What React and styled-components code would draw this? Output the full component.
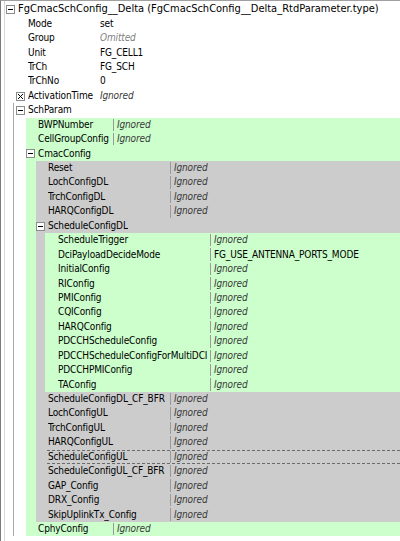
import React from 'react';
import styled, { createGlobalStyle, css } from 'styled-components';

const GlobalStyle = createGlobalStyle`
    html, body {
        margin: 0;
        padding: 0;
        background: #ffffff;
    }
    body {
        font-family: 'DejaVu Sans Condensed', 'Liberation Sans', sans-serif;
        font-size: 10px;
        color: #000000;
    }
`;

const GREEN = '#ccffcc';
const GRAY = '#cccccc';

// x of the label text for each depth, and where the body of that depth starts
const textX = (d) => 18 + 10 * d;
const bodyLeft = (d) => (d < 2 ? 1 : [26, 36, 45][d - 2]);
const labelWidth = [0, 72, 75, 122, 152];

const Frame = styled.div`
    width: 400px;
    height: 541px;
    box-sizing: border-box;
    padding-top: 1px;
    border-top: 1px solid #a0a0a0;
    border-left: 1px solid #7a7a7a;
    overflow: hidden;
    background: linear-gradient(to right, transparent 3px, #d8d8d8 3px, #d8d8d8 4px, transparent 4px) #ffffff;
`;

const GroupWrap = styled.div`
    ${(props) => props.$guide && css`
        background: linear-gradient(to right, transparent 12px, #a8a8a8 12px, #a8a8a8 13px, transparent 13px);
    `}
`;

const Body = styled.div`
    margin-left: ${(props) => props.$offset}px;
    background: ${(props) => props.$bg || 'transparent'};
`;

const Row = styled.div`
    display: flex;
    align-items: stretch;
    height: 14.45px;
    line-height: 14px;
    white-space: nowrap;
    padding-left: ${(props) => props.$pad}px;
    position: relative;
    font-size: ${(props) => (props.$title ? 11 : 10)}px;
    letter-spacing: ${(props) => (props.$title ? 0 : -0.15)}px;
`;

const Inner = styled.div`
    flex: 1;
    display: flex;
    align-items: center;
    box-sizing: border-box;
    margin-left: -1px;
    padding-left: 1px;
    border-top: 1px dashed ${(props) => (props.$focus ? '#6a6a6a' : 'transparent')};
    border-bottom: 1px dashed ${(props) => (props.$focus ? '#6a6a6a' : 'transparent')};
`;

const Toggle = styled.span`
    position: absolute;
    left: ${(props) => props.$left}px;
    top: 3px;
    width: 9px;
    height: 9px;
    box-sizing: border-box;
    border: 1px solid #8c8c8c;
    background: #ffffff;
    display: flex;
    align-items: center;
    justify-content: center;
`;

const Label = styled.span`
    width: ${(props) => (props.$width ? `${props.$width}px` : 'auto')};
    flex-shrink: 0;
    overflow: hidden;
`;

const Value = styled.span`
    height: 100%;
    display: flex;
    align-items: center;
    padding-left: ${(props) => (props.$sep ? 3 : 0)}px;
    border-left: ${(props) => (props.$sep ? '1px solid #9a9a9a' : 'none')};
    font-style: ${(props) => (props.$muted ? 'italic' : 'normal')};
    color: ${(props) => (props.$muted === 'light' ? '#7f7f7f' : props.$muted ? '#3a3a3a' : '#000000')};
`;

const MinusIcon = () => (
    <svg width="7" height="7" viewBox="0 0 7 7">
        <path d="M1 3.5H6" stroke="#000" strokeWidth="1" />
    </svg>
);

const CrossIcon = () => (
    <svg width="7" height="7" viewBox="0 0 7 7">
        <path d="M1 1L6 6M6 1L1 6" stroke="#000" strokeWidth="1" />
    </svg>
);

const ig = (label, extra = {}) => ({ label, value: 'Ignored', muted: true, ...extra });

const tree = {
    label: 'FgCmacSchConfig__Delta (FgCmacSchConfig__Delta_RtdParameter.type)',
    children: [
        { label: 'Mode', value: 'set' },
        { label: 'Group', value: 'Omitted', muted: 'light' },
        { label: 'Unit', value: 'FG_CELL1' },
        { label: 'TrCh', value: 'FG_SCH' },
        { label: 'TrChNo', value: '0' },
        ig('ActivationTime', { cross: true }),
        {
            label: 'SchParam',
            guide: true,
            bg: GREEN,
            children: [
                ig('BWPNumber'),
                ig('CellGroupConfig'),
                {
                    label: 'CmacConfig',
                    bg: GRAY,
                    children: [
                        ig('Reset'),
                        ig('LochConfigDL'),
                        ig('TrchConfigDL'),
                        ig('HARQConfigDL'),
                        {
                            label: 'ScheduleConfigDL',
                            bg: GREEN,
                            children: [
                                ig('ScheduleTrigger'),
                                { label: 'DciPayloadDecideMode', value: 'FG_USE_ANTENNA_PORTS_MODE' },
                                ig('InitialConfig'),
                                ig('RIConfig'),
                                ig('PMIConfig'),
                                ig('CQIConfig'),
                                ig('HARQConfig'),
                                ig('PDCCHScheduleConfig'),
                                ig('PDCCHScheduleConfigForMultiDCI'),
                                ig('PDCCHPMIConfig'),
                                ig('TAConfig'),
                            ],
                        },
                        ig('ScheduleConfigDL_CF_BFR'),
                        ig('LochConfigUL'),
                        ig('TrchConfigUL'),
                        ig('HARQConfigUL'),
                        ig('ScheduleConfigUL', { focus: true }),
                        ig('ScheduleConfigUL_CF_BFR'),
                        ig('GAP_Config'),
                        ig('DRX_Config'),
                        ig('SkipUplinkTx_Config'),
                    ],
                },
                ig('CphyConfig'),
            ],
        },
    ],
};

const Node = ({ node, depth }) => {
    const pad = textX(depth) - bodyLeft(depth);
    const toggleLeft = pad - 12;

    if (node.children) {
        return (
            <GroupWrap $guide={node.guide}>
                <Row $pad={pad} $title={depth === 0}>
                    <Toggle $left={toggleLeft}><MinusIcon /></Toggle>
                    <Inner>
                        <Label>{node.label}</Label>
                    </Inner>
                </Row>
                <Body $offset={bodyLeft(depth + 1) - bodyLeft(depth)} $bg={node.bg}>
                    {node.children.map((child) => (
                        <Node key={child.label} node={child} depth={depth + 1} />
                    ))}
                </Body>
            </GroupWrap>
        );
    }

    return (
        <Row $pad={pad}>
            {node.cross && <Toggle $left={toggleLeft}><CrossIcon /></Toggle>}
            <Inner $focus={node.focus}>
                <Label $width={labelWidth[depth]}>{node.label}</Label>
                <Value $sep={depth >= 2} $muted={node.muted}>{node.value}</Value>
            </Inner>
        </Row>
    );
};

const App = () => {
    return (
        <>
            <GlobalStyle />
            <Frame>
                <Node node={tree} depth={0} />
            </Frame>
        </>
    );
};

export default App;
